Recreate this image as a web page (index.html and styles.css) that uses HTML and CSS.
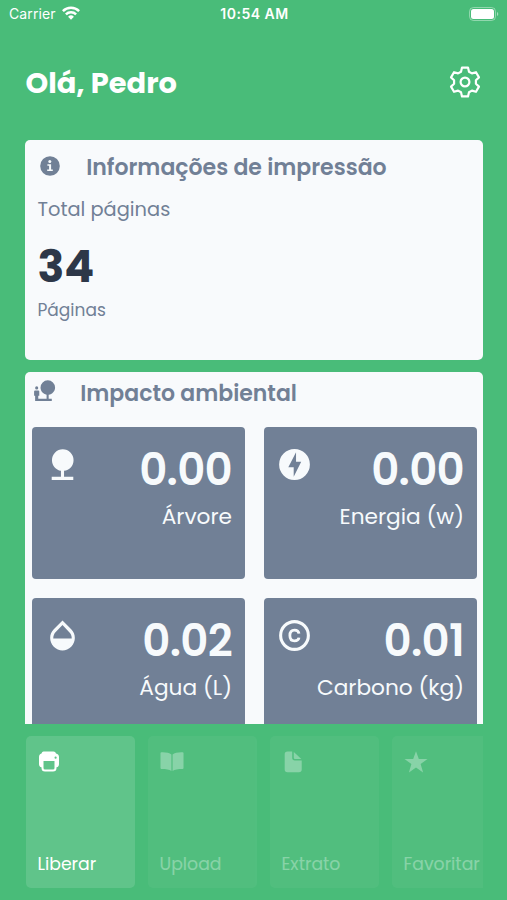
FILE: index.html
```html
<!DOCTYPE html>
<html lang="pt">
<head>
<meta charset="utf-8">
<meta name="viewport" content="width=device-width, initial-scale=1">
<title>Impressão</title>
<link rel="stylesheet" href="styles.css">
</head>
<body>
<div class="app">
  <div class="status">
    <div class="status-left">
      <span>Carrier</span>
      <svg class="wifi" viewBox="0 0 18 14" fill="none" stroke="#fff" stroke-width="2.5"><path d="M.9 5.1a11.6 11.6 0 0 1 16.2 0M3.9 8.3a7.3 7.3 0 0 1 10.2 0"/><path d="M9 13.8 6.1 10.8a4.1 4.1 0 0 1 5.8 0z" fill="#fff" stroke="none"/></svg>
    </div>
    <span class="clock">10:54 AM</span>
    <svg class="battery" viewBox="0 0 31 14"><rect x=".5" y=".5" width="26" height="13" rx="4" fill="none" stroke="#fff" stroke-opacity=".4"/><rect x="2" y="2" width="23" height="10" rx="2.5" fill="#fff"/><path d="M28 5a2.2 2.2 0 0 1 0 4z" fill="#fff" fill-opacity=".5"/></svg>
  </div>

  <header class="header">
    <h1>Olá, Pedro</h1>
    <svg class="gear" viewBox="-17 -17 34 34" fill="none" stroke="#fff" stroke-width="2.2" stroke-linejoin="round"><path d="M-4-10.3-3-14.4H3L4-10.3 6.92-8.61 10.97-9.8 13.97-4.6 10.92-1.69V1.69L13.97 4.6 10.97 9.8 6.92 8.61 4 10.3 3 14.4H-3L-4 10.3-6.92 8.61-10.97 9.8-13.97 4.6-10.92 1.69V-1.69L-13.97-4.6-10.97-9.8-6.92-8.61z"/><circle r="4.4"/></svg>
  </header>

  <main class="scroll">
    <section class="card info">
      <div class="card-head">
        <svg class="info-icon" viewBox="0 0 20 20"><circle cx="10" cy="10" r="9.8" fill="#718096"/><circle cx="9.8" cy="5.4" r="1.5" fill="#f7fafc"/><path d="M7.4 8.3h3.7v5.3h1.7v1.5H7.2v-1.5h1.9V9.8H7.4z" fill="#f7fafc"/></svg>
        <h2>Informações de impressão</h2>
      </div>
      <p class="total">Total páginas</p>
      <p class="count">34</p>
      <p class="unit">Páginas</p>
    </section>

    <section class="card impact">
      <div class="card-head">
        <svg class="people-icon" viewBox="0 0 24 24" fill="#718096"><path d="M4.5 11A1.5 1.5 0 0 0 6 9.500A1.5 1.5 0 0 0 4.500 8A1.5 1.5 0 0 0 3 9.500A1.5 1.5 0 0 0 4.500 11M22.170 9.170A7 7 0 0 0 8.170 9.170C8.170 12.640 10.690 15.500 14 16.060V20H6V17H7V13A1 1 0 0 0 6 12H3A1 1 0 0 0 2 13V17H3V22H19V20H16V16.120C19.470 15.710 22.170 12.760 22.170 9.170z"/></svg>
        <h2>Impacto ambiental</h2>
      </div>
      <div class="grid">
        <div class="tile">
          <svg viewBox="0 0 24 24"><path d="M13 16.120C16.470 15.710 19.170 12.760 19.170 9.170A7 7 0 0 0 5.170 9.170C5.170 12.640 7.690 15.500 11 16.060V20H5V22H19V20H13z"/></svg>
          <div class="reading"><p class="value">0.00</p><p class="label">Árvore</p></div>
        </div>
        <div class="tile">
          <svg viewBox="0 0 24 24"><path fill-rule="evenodd" d="M12 2.020a9.980 9.980 0 1 0 0 19.960a9.980 9.980 0 1 0 0-19.960zM11.480 20v-6.260H8L13 4v6.260h3.350z"/></svg>
          <div class="reading"><p class="value">0.00</p><p class="label">Energia (w)</p></div>
        </div>
        <div class="tile">
          <svg viewBox="0 0 24 24"><path fill-rule="evenodd" d="M17.660 8L12 2.350L6.340 8C4.780 9.560 4 11.640 4 13.640C4 15.640 4.780 17.750 6.340 19.310C7.900 20.870 9.950 21.660 12 21.660C14.050 21.660 16.100 20.870 17.660 19.310C19.220 17.750 20 15.640 20 13.640C20 11.640 19.220 9.560 17.660 8M6 14C6 12 6.620 10.730 7.760 9.600L12 5.270L16.240 9.650C17.380 10.770 18 12 18 14z"/></svg>
          <div class="reading"><p class="value">0.02</p><p class="label">Água (L)</p></div>
        </div>
        <div class="tile">
          <svg viewBox="0 0 24 24"><g fill="none" stroke="#f7fafc"><circle cx="12" cy="12" r="9" stroke-width="2"/><path d="M14.900 10.800C14.700 9.300 13.600 8.500 12 8.500C10 8.500 9 9.900 9 12C9 14.100 10 15.500 12 15.500C13.600 15.500 14.700 14.700 14.900 13.400" stroke-width="1.8"/></g></svg>
          <div class="reading"><p class="value">0.01</p><p class="label">Carbono (kg)</p></div>
        </div>
      </div>
    </section>
  </main>

  <nav class="actions">
    <a class="action active">
      <svg viewBox="0 0 24 24"><path fill-rule="evenodd" d="M5.500 1.500h10q2 0 2.500 2 3 .5 3 3.500v7q0 3-2.500 3.200v.8q0 3.500-3.500 3.500H7q-3.500 0-3.500-3.500v-.8Q1 17 1 14V7q0-3 2.500-3.500.5-2 2-2zM5.500 11v7q0 1.500 1.500 1.500h8q1.500 0 1.500-1.500v-7zM17.600 6.600a1.100 1.100 0 1 0 0 2.200a1.100 1.100 0 1 0 0-2.200z"/></svg>
      <span>Liberar</span>
    </a>
    <a class="action">
      <svg viewBox="0 0 24 24"><path d="M.5 3Q.5 2.200 1.500 2.200C6 2.100 9.500 2.700 11.400 4.600V20.900C9.500 19.300 6 18.900 1.500 18.900Q.5 18.900.5 18zM23.500 3Q23.500 2.200 22.500 2.200C18 2.100 14.500 2.700 12.600 4.600V20.900C14.500 19.300 18 18.900 22.500 18.900Q23.500 18.900 23.500 18z"/></svg>
      <span>Upload</span>
    </a>
    <a class="action">
      <svg viewBox="0 0 24 24"><path d="M5.500 1.500h4.700v6.300q0 2.700 2.700 2.700h6.800v9q0 2.800-2.800 2.800H5.500q-2.800 0-2.800-2.800V4.300q0-2.800 2.800-2.800zM11.800 1.900 19.300 9h-6.200q-1.300 0-1.300-1.300z"/></svg>
      <span>Extrato</span>
    </a>
    <a class="action">
      <svg viewBox="0 0 24 24"><path d="M12 1.200 14.800 9H23.500L16.600 14 19.100 22.400 12 17.400 4.900 22.400 7.400 14 .5 9H9.200z"/></svg>
      <span>Favoritar</span>
    </a>
  </nav>
</div>
</body>
</html>
```
FILE: styles.css
```css
* { box-sizing: border-box; margin: 0; padding: 0; }

body {
  background: #49bc79;
  font-family: Poppins, Inter, sans-serif;
  color: #fff;
}

.app {
  display: flex;
  flex-direction: column;
  width: 507px;
  height: 900px;
  overflow: hidden;
}

svg { display: block; flex: none; }

.status {
  display: grid;
  grid-template-columns: 1fr auto 1fr;
  align-items: center;
  height: 28px;
  padding: 0 7px 0 9px;
  font-family: Inter, sans-serif;
  font-size: 14px;
  line-height: 28px;
}
.status-left { display: flex; align-items: center; gap: 6px; letter-spacing: 0.1px; }
.wifi { width: 18px; height: 14px; margin-top: -2px; }
.clock { font-weight: 600; letter-spacing: 0.5px; }
.battery { width: 31px; height: 14px; margin-top: -1px; justify-self: end; }

.header {
  display: flex;
  align-items: center;
  justify-content: space-between;
  height: 112px;
  padding: 0 25px 4px 25.500px;
}
h1 {
  padding-top: 2px;
  font-size: 28.900px;
  line-height: 40px;
  font-weight: 700;
}
.gear { width: 34px; height: 34px; }

.scroll {
  display: flex;
  flex-direction: column;
  gap: 12px;
  height: 583.5px;
  padding: 0 24.5px 0 25px;
  overflow: hidden;
}

.card {
  flex: none;
  background: #f8fafc;
  border-radius: 5px;
  color: #718096;
}
.card-head { display: flex; height: 32px; }
h2 {
  padding-top: 1px;
  font-size: 22px;
  line-height: 32px;
  font-weight: 600;
  white-space: nowrap;
}

.info { height: 220px; padding: 11px 12.500px; }
.info-icon { width: 20px; height: 20px; margin: 4.500px 26.200px 0 2.500px; }
.total {
  margin-top: 12px;
  font-size: 19.400px;
  line-height: 30px;
}
.count {
  margin-top: 12px;
  font-size: 44.300px;
  line-height: 60px;
  font-weight: 700;
  color: #2d3748;
}
.unit { font-size: 17px; line-height: 26px; }

.impact { padding: 5px 6px 6px 6.500px; }
.people-icon { width: 25px; height: 25px; margin: 0.500px 23.700px 0 0; }

.grid {
  display: grid;
  grid-template-columns: repeat(2, minmax(0, 1fr));
  gap: 19px;
  margin-top: 18px;
}
.tile {
  display: flex;
  justify-content: space-between;
  height: 152px;
  padding: 13px 12.500px 0 12px;
  border-radius: 4px;
  background: #718096;
  color: #f7fafc;
}
.tile svg {
  width: 37px;
  height: 37px;
  margin-top: 6px;
  fill: #f7fafc;
}
.reading { text-align: right; white-space: nowrap; }
.value {
  font-size: 43.500px;
  line-height: 60px;
  font-weight: 600;
  letter-spacing: -0.700px;
}
.label {
  margin-top: 1px;
  font-size: 21.700px;
  line-height: 32px;
}

.actions {
  display: flex;
  gap: 12.500px;
  margin: 12.500px 24.500px 12px 25.500px;
  height: 152px;
  overflow: hidden;
}
.action {
  display: flex;
  flex: none;
  flex-direction: column;
  justify-content: space-between;
  width: 109.500px;
  padding: 13.500px 11.500px 11.500px 12px;
  border-radius: 5px;
  background: rgba(255, 255, 255, 0.13);
  opacity: 0.35;
}
.action.active { opacity: 1; }
.action svg { width: 24px; height: 24px; fill: #fff; }
.action span { font-size: 17.300px; line-height: 26px; }
```
